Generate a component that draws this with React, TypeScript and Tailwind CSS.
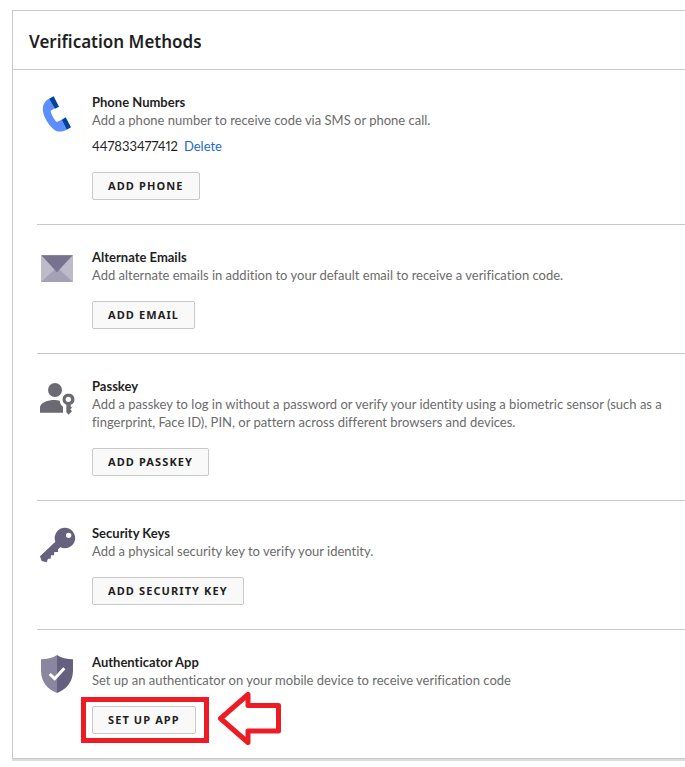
import type { ReactNode } from "react";

interface Method {
  id: string;
  title: string;
  description: string;
  action: string;
  icon: ReactNode;
  phone?: string;
  highlighted?: boolean;
}

const PhoneIcon = () => (
  <svg viewBox="30 27 108 120" className="h-10 w-9 shrink-0" aria-hidden="true">
    <path
      d="M57 41C42 49 37 62 39 79C42 101 61 128 77 137C89 142 101 139 110 134L95 104L81 111C75 109 61 83 62 77L75 70Z"
      fill="#5c8eff"
    />
    <path d="M57 41L71 34L87 65L75 71Z" fill="#00439c" />
    <path d="M95 104L107 97L123 127L110 134Z" fill="#00439c" />
  </svg>
);

const MailIcon = () => (
  <svg viewBox="30 27 108 120" className="h-10 w-9 shrink-0" aria-hidden="true">
    <path d="M33 45H129V126H33Z" fill="#bdbbca" />
    <path d="M33 126L81 82L129 126Z" fill="#a4a1b5" />
    <path d="M34 46H128L81 97Z" fill="#77738f" />
  </svg>
);

const PasskeyIcon = () => (
  <svg viewBox="30 24 108 120" className="h-10 w-9 shrink-0" aria-hidden="true">
    <circle cx="75" cy="60" r="21" fill="#6b6a73" />
    <path d="M30 128V112C31 98 52 90 75 90C80 90 85 91 89 92C90 101 94 106 99 110V128Z" fill="#6b6a73" />
    <path
      fillRule="evenodd"
      d="M115 71A17 17 0 0 1 122 104V109L126 113L121 118L126 124L116 134L109 127V104A17 17 0 0 1 115 71ZM115 80A8 8 0 1 0 115 96A8 8 0 1 0 115 80Z"
      fill="#6b6a73"
    />
  </svg>
);

const KeyIcon = () => (
  <svg viewBox="30 30 108 120" className="h-10 w-9 shrink-0" aria-hidden="true">
    <path
      fillRule="evenodd"
      d="M105 38A31 31 0 1 1 91 97L84 103V111H73L72 121H63L62 131H54L50 142L35 138L30 124L76 80A31 31 0 0 1 105 38ZM116 53A8 8 0 1 0 116 69A8 8 0 1 0 116 53Z"
      fill="#66617f"
    />
  </svg>
);

const ShieldIcon = () => (
  <svg viewBox="30 27 108 120" className="h-10 w-9 shrink-0" aria-hidden="true">
    <path d="M81 30C68 39 50 43 33 43V78C34 114 55 134 81 144Z" fill="#8a86a0" />
    <path d="M81 30C94 39 112 43 129 43V78C128 114 107 134 81 144Z" fill="#65607e" />
    <path d="M59 87L74 101L103 70" fill="none" stroke="#fff" strokeWidth="9" />
  </svg>
);

const methods: Method[] = [
  {
    id: "phone",
    title: "Phone Numbers",
    description: "Add a phone number to receive code via SMS or phone call.",
    action: "ADD PHONE",
    icon: <PhoneIcon />,
    phone: "447833477412",
  },
  {
    id: "email",
    title: "Alternate Emails",
    description: "Add alternate emails in addition to your default email to receive a verification code.",
    action: "ADD EMAIL",
    icon: <MailIcon />,
  },
  {
    id: "passkey",
    title: "Passkey",
    description:
      "Add a passkey to log in without a password or verify your identity using a biometric sensor (such as a fingerprint, Face ID), PIN, or pattern across different browsers and devices.",
    action: "ADD PASSKEY",
    icon: <PasskeyIcon />,
  },
  {
    id: "security-key",
    title: "Security Keys",
    description: "Add a physical security key to verify your identity.",
    action: "ADD SECURITY KEY",
    icon: <KeyIcon />,
  },
  {
    id: "app",
    title: "Authenticator App",
    description: "Set up an authenticator on your mobile device to receive verification code",
    action: "SET UP APP",
    icon: <ShieldIcon />,
    highlighted: true,
  },
];

// Red frame and arrow pointing at the button
const Callout = () => (
  <>
    <div className="pointer-events-none absolute -top-[9px] -left-[11px] h-[46px] w-32 border-5 border-[#ed1c24]" />
    <svg
      viewBox="0 0 64 57"
      className="pointer-events-none absolute -top-4 left-[125px] h-[57px] w-16"
      aria-hidden="true"
    >
      <path
        d="M3.5 28.5L31 4.500V15.500H61.500V41H31V52.500Z"
        fill="none"
        stroke="#ed1c24"
        strokeWidth="5"
        strokeLinejoin="round"
      />
    </svg>
  </>
);

const MethodRow = ({ method }: { method: Method }) => (
  <section className="flex gap-4 border-b border-[#c9c9c9] pt-[23px] pb-6 pl-[3px] last:border-b-0">
    <div className="pt-px">{method.icon}</div>
    <div className="min-w-0 flex-1 pr-2">
      <h2 className="text-[13px] leading-[18px] font-bold text-[#1f1f1f]">{method.title}</h2>
      <p className="text-[13px] leading-[18px] text-[#6b6b6b]">{method.description}</p>
      {method.phone && (
        <div className="mt-2 flex gap-1.5 text-[13px] leading-[18px] text-[#1f1f1f]">
          <span className="proportional-nums">{method.phone}</span>
          <a href="#delete" className="text-[#2567cf]">
            Delete
          </a>
        </div>
      )}
      <div className="relative mt-[17px] w-fit">
        <button
          type="button"
          className="block h-7 rounded-xs border border-[#c9c9c9] bg-[#f9f9f9] px-[15px] font-['Noto_Sans',sans-serif] text-[11px] font-bold tracking-widest text-[#1f1f1f]"
        >
          {method.action}
        </button>
        {method.highlighted && <Callout />}
      </div>
    </div>
  </section>
);

export default function App() {
  return (
    <main className="min-h-screen bg-white pt-2.5 pb-2 pl-3 font-[Lato,sans-serif] [font-variant-ligatures:none]">
      <div className="border-t border-b border-l border-[#c9c9c9] shadow-[0_2px_0_#dddddd]">
        <header className="flex h-[59px] items-center border-b border-[#c9c9c9] px-4 pt-1">
          <h1 className="font-['Noto_Sans',sans-serif] text-[17px] leading-6 font-semibold text-[#1f1f1f]">
            Verification Methods
          </h1>
        </header>
        <div className="pl-6">
          {methods.map((m) => (
            <MethodRow key={m.id} method={m} />
          ))}
        </div>
      </div>
    </main>
  );
}
